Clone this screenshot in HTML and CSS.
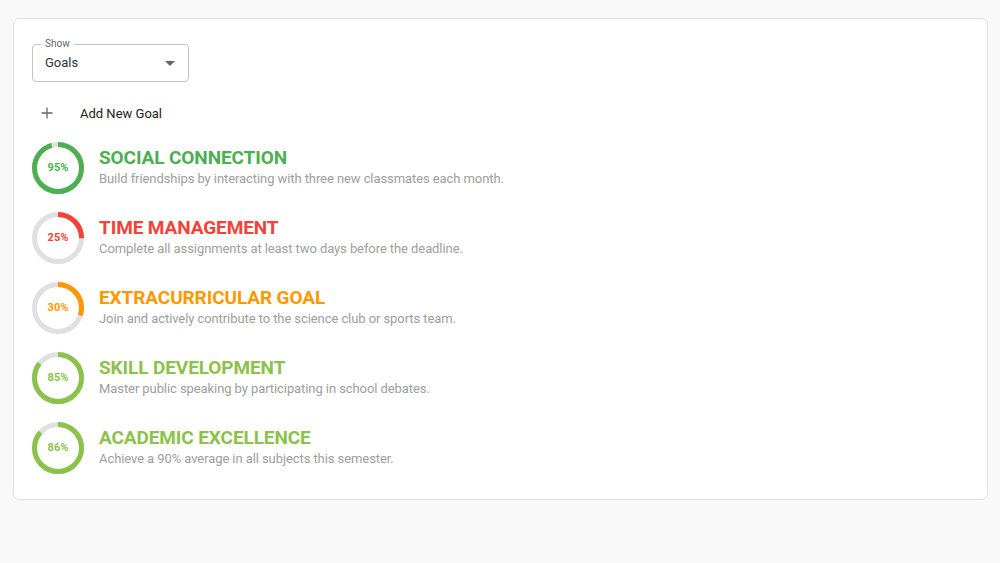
FILE: index.html
```html
<!DOCTYPE html>
<html>
<head>
<meta charset="utf-8">
<link rel="stylesheet" href="styles.css">
</head>
<body>
<div class="card">
  <div class="select">
    <span class="select-label">Show</span>
    <span class="select-value">Goals</span>
    <svg class="select-arrow" width="10" height="5" viewBox="0 0 10 5"><path d="M0 0 L10 0 L5 5 Z" fill="#666"/></svg>
  </div>
  <div class="add-row">
    <svg class="plus" width="12" height="12" viewBox="0 0 12 12"><path d="M6 0.5 V11.5 M0.5 6 H11.5" stroke="#666" stroke-width="1.3" fill="none"/></svg>
    <span class="add-text">Add New Goal</span>
  </div>
  <ul class="goals">
    <li class="goal green">
      <div class="ring"><svg width="52" height="52" viewBox="0 0 52 52"><circle class="track" cx="26" cy="26" r="23.5"/><circle class="bar" cx="26" cy="26" r="23.5" style="stroke-dasharray: 140.28 147.65"/></svg><span class="pct">95%</span></div>
      <div class="goal-text"><div class="title">SOCIAL CONNECTION</div><div class="desc">Build friendships by interacting with three new classmates each month.</div></div>
    </li>
    <li class="goal red">
      <div class="ring"><svg width="52" height="52" viewBox="0 0 52 52"><circle class="track" cx="26" cy="26" r="23.5"/><circle class="bar" cx="26" cy="26" r="23.5" style="stroke-dasharray: 36.91 147.65"/></svg><span class="pct">25%</span></div>
      <div class="goal-text"><div class="title">TIME MANAGEMENT</div><div class="desc">Complete all assignments at least two days before the deadline.</div></div>
    </li>
    <li class="goal orange">
      <div class="ring"><svg width="52" height="52" viewBox="0 0 52 52"><circle class="track" cx="26" cy="26" r="23.5"/><circle class="bar" cx="26" cy="26" r="23.5" style="stroke-dasharray: 44.30 147.65"/></svg><span class="pct">30%</span></div>
      <div class="goal-text"><div class="title">EXTRACURRICULAR GOAL</div><div class="desc">Join and actively contribute to the science club or sports team.</div></div>
    </li>
    <li class="goal lime">
      <div class="ring"><svg width="52" height="52" viewBox="0 0 52 52"><circle class="track" cx="26" cy="26" r="23.5"/><circle class="bar" cx="26" cy="26" r="23.5" style="stroke-dasharray: 125.50 147.65"/></svg><span class="pct">85%</span></div>
      <div class="goal-text"><div class="title">SKILL DEVELOPMENT</div><div class="desc">Master public speaking by participating in school debates.</div></div>
    </li>
    <li class="goal lime">
      <div class="ring"><svg width="52" height="52" viewBox="0 0 52 52"><circle class="track" cx="26" cy="26" r="23.5"/><circle class="bar" cx="26" cy="26" r="23.5" style="stroke-dasharray: 126.98 147.65"/></svg><span class="pct">86%</span></div>
      <div class="goal-text"><div class="title">ACADEMIC EXCELLENCE</div><div class="desc">Achieve a 90% average in all subjects this semester.</div></div>
    </li>
  </ul>
</div>
</body>
</html>
```

FILE: styles.css
```css
html, body {
  margin: 0;
  padding: 0;
}
body {
  background: #f9f9f9;
  font-family: Roboto, "Liberation Sans", sans-serif;
  padding: 18px 12px 0 13px;
  height: 563px;
  box-sizing: border-box;
}
.card {
  background: #fff;
  border: 1px solid #e0e0e0;
  border-radius: 6px;
  height: 482px;
  box-sizing: border-box;
  padding: 25px 18px 0 18px;
}
.select {
  position: relative;
  width: 157px;
  height: 38px;
  box-sizing: border-box;
  border: 1px solid #c4c4c4;
  border-radius: 4px;
  display: flex;
  align-items: center;
  padding: 0 12px;
}
.select-label {
  position: absolute;
  top: -7px;
  left: 8px;
  padding: 0 4px;
  background: #fff;
  font-size: 10px;
  line-height: 12px;
  color: #666;
}
.select-value {
  flex: 1;
  font-size: 13px;
  color: #333;
  padding-bottom: 1px;
}
.select-arrow {
  margin-right: 1px;
}
.add-row {
  display: flex;
  align-items: center;
  height: 24px;
  margin-top: 19px;
  padding-left: 9px;
}
.plus {
  margin-right: 27px;
}
.add-text {
  font-size: 13px;
  color: #222;
}
.goals {
  list-style: none;
  margin: 17px 0 0 0;
  padding: 0;
  display: flex;
  flex-direction: column;
  gap: 18px;
}
.goal {
  display: flex;
  align-items: center;
  gap: 15px;
}
.ring {
  position: relative;
  width: 52px;
  height: 52px;
  flex: none;
}
.ring svg {
  display: block;
  transform: rotate(-90deg);
}
.track {
  fill: none;
  stroke: #e0e0e0;
  stroke-width: 5;
}
.bar {
  fill: none;
  stroke-width: 5;
}
.pct {
  position: absolute;
  inset: 0;
  display: flex;
  align-items: center;
  justify-content: center;
  font-size: 11px;
  line-height: 1;
  font-weight: 700;
  padding-bottom: 2px;
}
.title {
  font-size: 19px;
  font-weight: 700;
  line-height: 22px;
  letter-spacing: -0.1px;
}
.desc {
  font-size: 13px;
  line-height: 20px;
  color: #9e9e9e;
  letter-spacing: -0.08px;
}
.green .bar { stroke: #4caf50; }
.green .pct, .green .title { color: #4caf50; }
.red .bar { stroke: #f44336; }
.red .pct, .red .title { color: #f44336; }
.orange .bar { stroke: #ff9800; }
.orange .pct, .orange .title { color: #ff9800; }
.lime .bar { stroke: #8bc34a; }
.lime .pct, .lime .title { color: #8bc34a; }
```
